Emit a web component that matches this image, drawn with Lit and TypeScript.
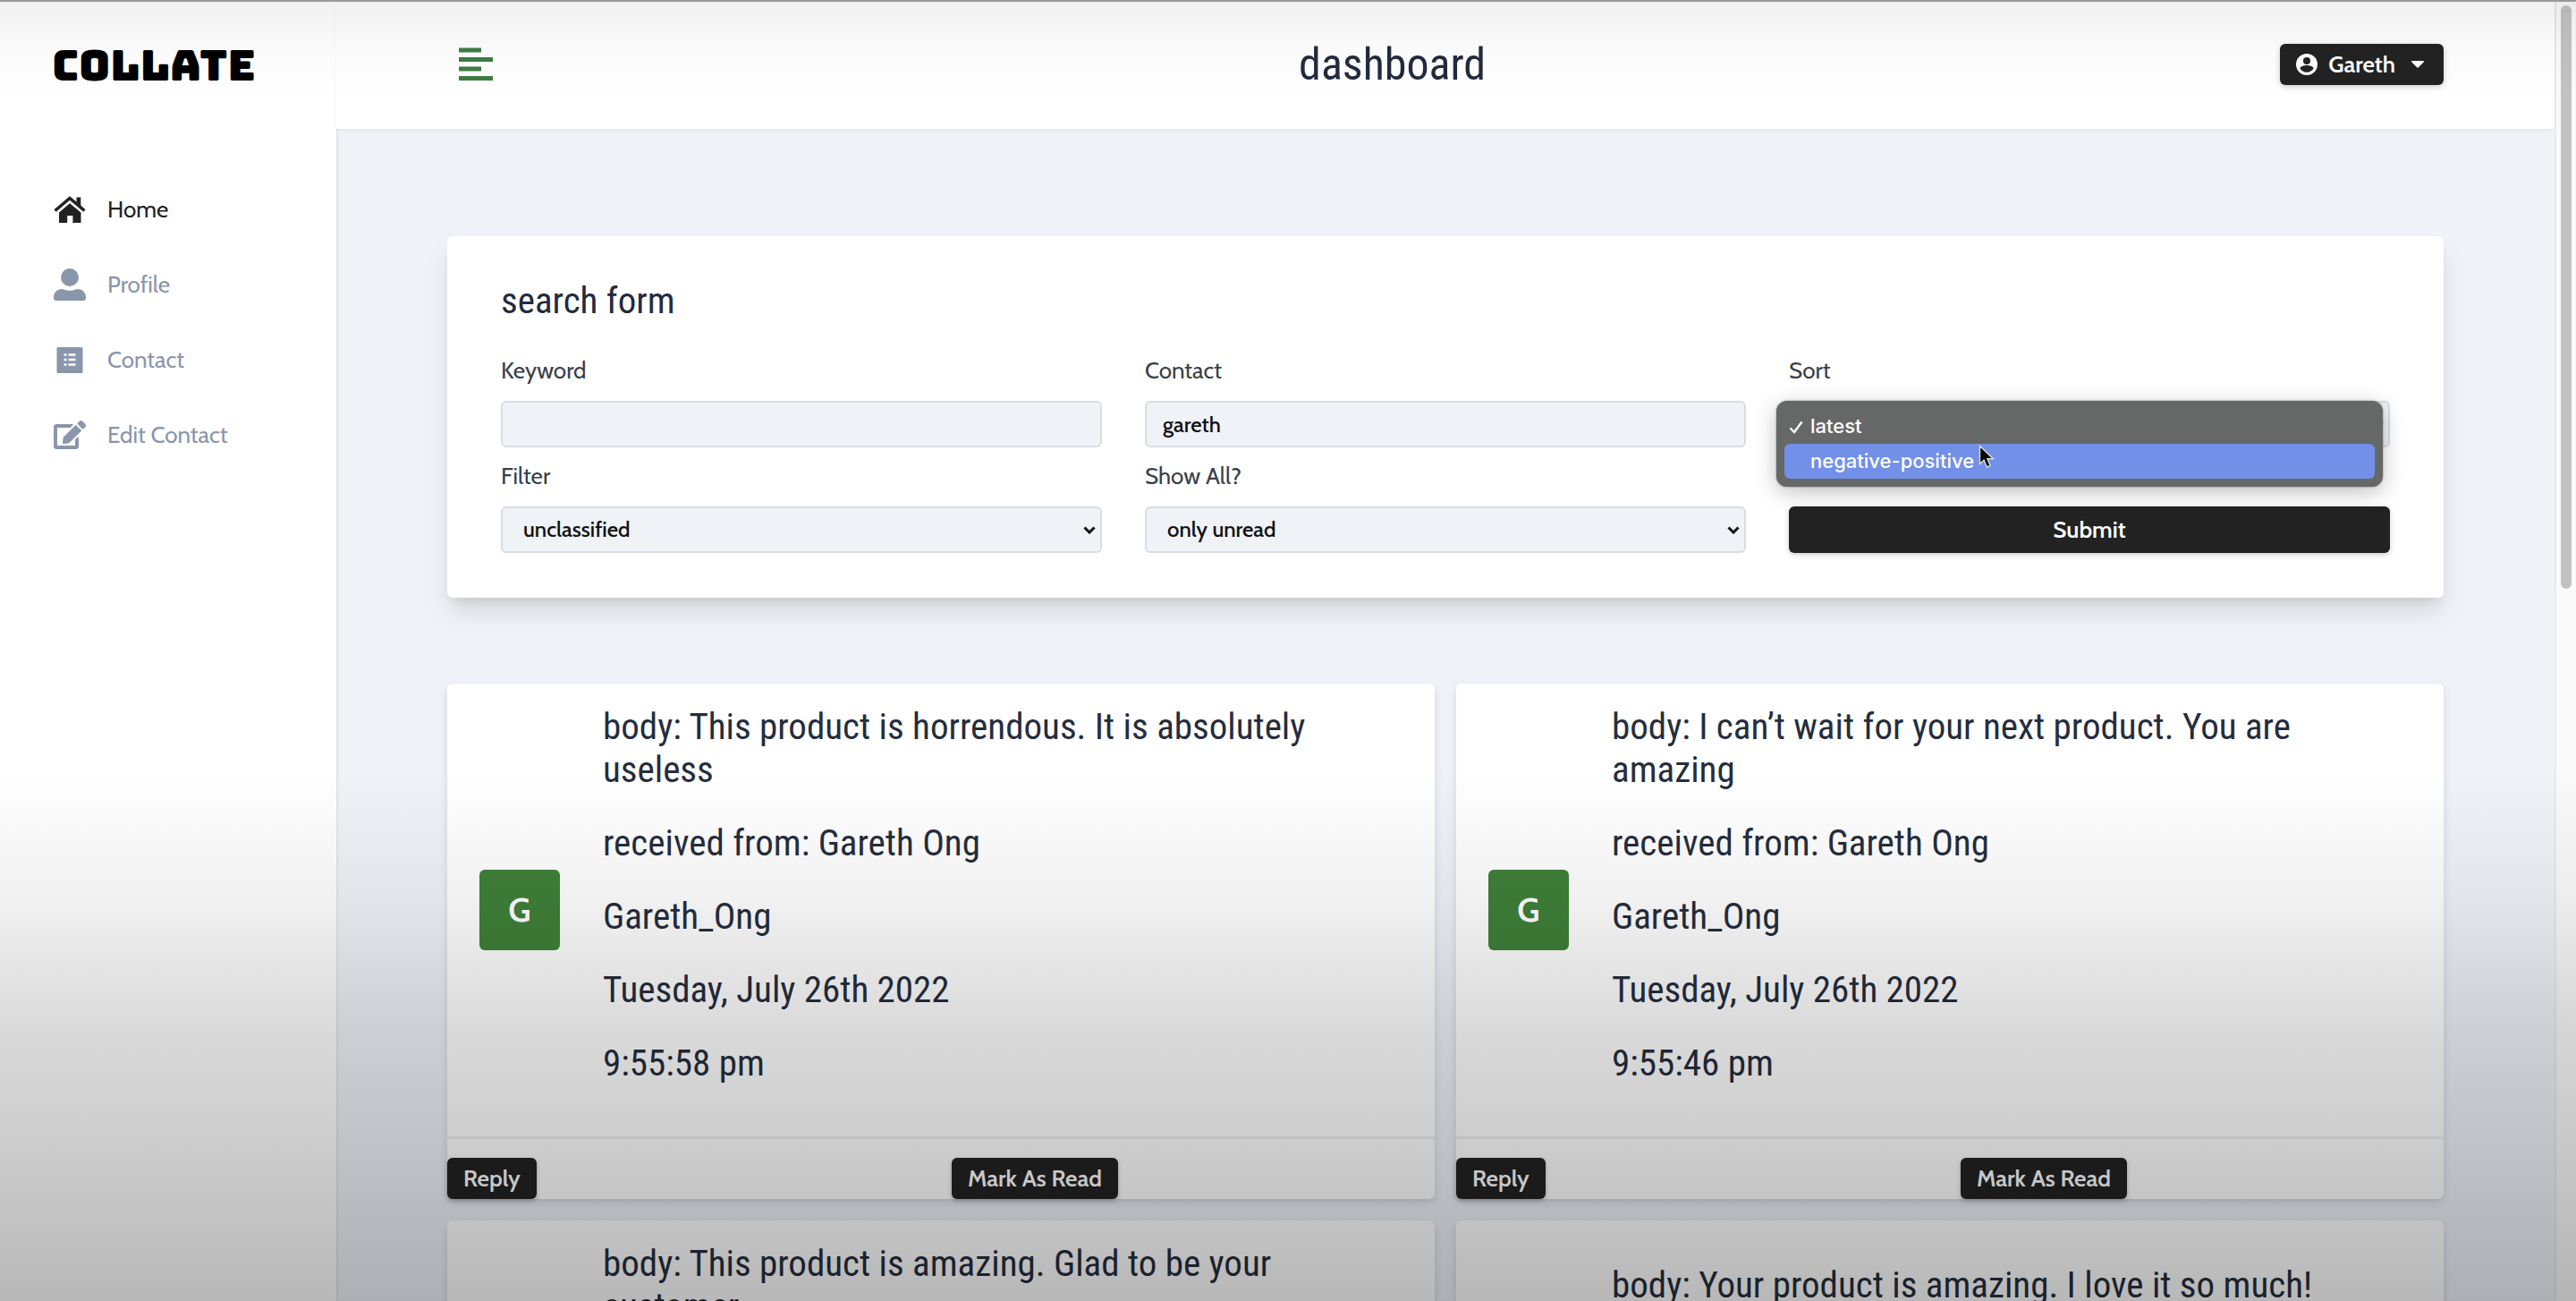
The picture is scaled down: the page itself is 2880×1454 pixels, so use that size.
import { LitElement, html, css, svg } from "lit";
import { customElement, property, state } from "lit/decorators.js";

const icons = {
  home: svg`<svg viewBox="0 0 36 36" aria-hidden="true"><path d="M1.5 19.5 18 5.5l16.5 14" fill="none" stroke="currentColor" stroke-width="3.6"/><path d="M25.5 4.5h4.8V15l-4.8-4z" fill="currentColor"/><path d="M6 21.5 18 11.2l12.5 10.3V33H21.4v-8h-6.2v8H6z" fill="currentColor"/></svg>`,
  user: svg`<svg viewBox="0 0 36 36" aria-hidden="true"><circle cx="18" cy="10" r="10" fill="currentColor"/><path d="M0 32c0-5 4-9 9-9h1c5 2.400 11 2.400 16 0h1c5 0 9 4 9 9v1c0 2-1 3-3 3H3c-2 0-3-1-3-3z" fill="currentColor"/></svg>`,
  list: svg`<svg viewBox="0 0 36 36" aria-hidden="true"><rect x="3.500" y="4" width="29" height="29" rx="1.500" fill="currentColor"/><path d="M11.500 12.500h3M11.500 18h3M11.500 23.500h3M16.500 12.500h8M16.500 18h8M16.500 23.500h8" stroke="#fff" stroke-width="2.400"/></svg>`,
  edit: svg`<svg viewBox="0 0 576 512" aria-hidden="true"><path fill="currentColor" d="M402.6 83.2l90.2 90.2c3.800 3.800 3.800 10 0 13.800L274.400 405.600l-92.800 10.300c-12.400 1.400-22.900-9.100-21.500-21.500l10.300-92.800L388.800 83.200c3.800-3.800 10-3.800 13.800 0zm162-22.900l-48.800-48.800c-15.200-15.200-39.900-15.200-55.200 0l-35.400 35.400c-3.800 3.800-3.800 10 0 13.800l90.200 90.200c3.800 3.800 10 3.800 13.800 0l35.400-35.400c15.200-15.300 15.200-40 0-55.200zM384 346.200V448H64V128h229.800c3.200 0 6.200-1.300 8.500-3.500l40-40c7.600-7.600 2.200-20.500-8.500-20.500H48C21.500 64 0 85.500 0 112v352c0 26.500 21.500 48 48 48h352c26.500 0 48-21.500 48-48V306.200c0-10.700-12.900-16-20.500-8.500l-40 40c-2.200 2.300-3.500 5.300-3.500 8.500z"/></svg>`,
  menu: svg`<svg viewBox="0 0 38 40" aria-hidden="true"><path d="M0 4h25M0 14.500h38M0 25h25M0 35.500h38" stroke="currentColor" stroke-width="5"/></svg>`,
  account: svg`<svg viewBox="0 0 24 24" aria-hidden="true"><circle cx="12" cy="12" r="12" fill="currentColor"/><circle cx="12" cy="8" r="4" fill="#222"/><path d="M4.500 16.500c0-2 4-3.500 7.500-3.500s7.500 1.500 7.500 3.500c-1.500 2.500-4 4.300-7.500 4.300s-6-1.800-7.500-4.300z" fill="#222"/></svg>`,
  caret: svg`<svg viewBox="0 0 16 9" aria-hidden="true"><path d="M1 0h14c1 0 1.300 1 .6 1.600L9 8.400c-.6.6-1.400.6-2 0L.4 1.600C-.3 1 0 0 1 0z" fill="currentColor"/></svg>`,
  chevron: svg`<svg viewBox="0 0 14 9" aria-hidden="true"><path d="M1.500 1.500 7 7l5.500-5.500" fill="none" stroke="currentColor" stroke-width="3"/></svg>`,
  check: svg`<svg viewBox="0 0 16 16" aria-hidden="true"><path d="M1.500 9.500 6 14 14.500 2.500" fill="none" stroke="currentColor" stroke-width="2.400"/></svg>`,
  pointer: svg`<svg viewBox="0 0 18 28" aria-hidden="true"><path d="M1.500 1.500v20l4.600-4.400 3.200 7.900 3.800-1.600-3.200-7.600h6.600z" fill="#000" stroke="#ddd" stroke-width="1.400"/></svg>`,
};

@customElement("message-card")
export class MessageCard extends LitElement {
  @property() body = "";
  @property() time = "";

  static styles = css`
    :host {
      display: grid;
      grid-template-rows: 1fr auto;
      background: #fff;
      border-radius: 6px;
      box-shadow: 0 4px 10px rgba(0, 0, 0, 0.12);
      color: #252d3d;
      font-family: "Cabin", "Lato", sans-serif;
    }
    .head {
      display: grid;
      grid-template-columns: auto 1fr;
      align-items: center;
      gap: 48px;
      padding: 24px 36px;
      border-bottom: 3px solid #eef0f3;
    }
    .avatar {
      display: grid;
      place-items: center;
      width: 90px;
      height: 90px;
      border-radius: 6px;
      background: #3f8039;
      color: #fff;
      font-size: 38px;
      font-weight: 600;
      line-height: 48px;
    }
    .info {
      padding-right: 48px;
    }
    h2 {
      margin: 0 0 34px;
      font: 400 41px/48px "Roboto Condensed", "Roboto", sans-serif;
    }
    .actions {
      display: grid;
      grid-template-columns: 1fr 1fr;
      gap: 24px;
      padding-top: 21px;
      justify-items: start;
    }
    button {
      height: 46px;
      padding: 0 18px;
      border: 0;
      border-radius: 6px;
      background: #222;
      color: #fff;
      font: 600 26px/44px "Cabin", "Lato", sans-serif;
      box-shadow: 0 2px 5px rgba(0, 0, 0, 0.25);
    }
  `;

  render() {
    return html`
      <div class="head">
        <div class="avatar">G</div>
        <div class="info">
          <h2>body: ${this.body}</h2>
          <h2>received from: Gareth Ong</h2>
          <h2>Gareth_Ong</h2>
          <h2>Tuesday, July 26th 2022</h2>
          ${this.time ? html`<h2>${this.time}</h2>` : ""}
        </div>
      </div>
      <div class="actions">
        <button type="button">Reply</button>
        <button type="button">Mark As Read</button>
      </div>
    `;
  }
}

@customElement("app-root")
export class AppRoot extends LitElement {
  @state() private sort = "latest";

  private links = [
    { label: "Home", icon: icons.home, active: true },
    { label: "Profile", icon: icons.user, active: false },
    { label: "Contact", icon: icons.list, active: false },
    { label: "Edit Contact", icon: icons.edit, active: false },
  ];

  private messages = [
    { body: "This product is horrendous. It is absolutely useless", time: "9:55:58 pm" },
    { body: "I can’t wait for your next product. You are amazing", time: "9:55:46 pm" },
    { body: "This product is amazing. Glad to be your customer", time: "" },
    { body: "Your product is amazing. I love it so much!", time: "" },
  ];

  static styles = css`
    :host {
      display: block;
      font-family: "Cabin", "Lato", sans-serif;
      color: #222;
    }
    * {
      box-sizing: border-box;
    }
    svg {
      display: block;
      width: 100%;
    }
    .shell {
      position: relative;
      display: grid;
      grid-template-columns: 376px minmax(0, 1fr) 24px;
      grid-template-rows: 100%;
      height: 100vh;
      overflow: hidden;
      background: #eff3f8;
    }
    .shade {
      position: absolute;
      inset: 0;
      pointer-events: none;
      border-top: 2px solid #999;
      background:
        linear-gradient(rgba(0, 0, 0, 0.06), rgba(0, 0, 0, 0.02) 52px, transparent 110px),
        linear-gradient(transparent 59%, rgba(0, 0, 0, 0.055) 69%, rgba(0, 0, 0, 0.145) 79%, rgba(0, 0, 0, 0.2) 88%, rgba(0, 0, 0, 0.28));
    }
    .sidebar {
      background: #fff;
    }
    .logo {
      display: flex;
      align-items: center;
      height: 144px;
      padding: 2px 58px 0;
      margin-bottom: 48px;
      color: #000;
      font: 400 48px/1 "Bungee", "Roboto", sans-serif;
    }
    .link {
      display: grid;
      grid-template-columns: 36px auto;
      align-items: center;
      gap: 24px;
      height: 84px;
      padding-left: 60px;
      color: #8a96aa;
      font-size: 26px;
      text-decoration: none;
    }
    .link.active {
      color: #222;
    }
    main {
      box-shadow: inset 2px 0 2px rgba(0, 0, 0, 0.06);
    }
    .navbar {
      height: 144px;
      background: #fff;
      box-shadow: 0 2px 3px rgba(0, 0, 0, 0.05);
    }
    .bar {
      display: flex;
      align-items: center;
      justify-content: space-between;
      width: 90%;
      height: 100%;
      margin: 0 auto;
    }
    .toggle {
      width: 64px;
      padding: 0 13px;
      border: 0;
      background: none;
      color: #3f7d43;
    }
    h1 {
      margin: 0;
      color: #222b3e;
      font: 400 50px/60px "Roboto Condensed", "Roboto", sans-serif;
    }
    .account {
      display: flex;
      align-items: center;
      gap: 12px;
      height: 46px;
      padding: 0 22px 0 18px;
      border: 0;
      border-radius: 6px;
      background: #222;
      color: #fff;
      font: 600 26px/46px "Cabin", "Lato", sans-serif;
      box-shadow: 0 2px 6px rgba(0, 0, 0, 0.2);
    }
    .face {
      width: 24px;
    }
    .caret {
      width: 14px;
      margin-left: 6px;
    }
    .content {
      width: 90%;
      margin: 0 auto;
      padding-top: 120px;
    }
    form {
      padding: 48px 60px 50px;
      margin-bottom: 96px;
      border-radius: 6px;
      background: #fff;
      box-shadow: 0 18px 30px -4px rgba(0, 0, 0, 0.12), 0 8px 12px -4px rgba(0, 0, 0, 0.08);
    }
    h2 {
      margin: 0 0 36px;
      color: #222b3e;
      font: 400 41px/48px "Roboto Condensed", "Roboto", sans-serif;
    }
    .fields {
      display: grid;
      grid-template-columns: repeat(3, minmax(0, 1fr));
      gap: 14px 48px;
      align-items: end;
    }
    .field {
      position: relative;
      display: grid;
      gap: 16px;
    }
    label {
      color: #3a3f47;
      font-size: 26px;
      line-height: 36px;
    }
    input,
    select {
      width: 100%;
      height: 52px;
      padding: 0 18px;
      border: 2px solid #d9dde3;
      border-radius: 6px;
      background: #eff3f8;
      color: #111;
      font: 500 24px/36px "Cabin", "Lato", sans-serif;
      appearance: none;
      outline: 0;
    }
    select {
      padding: 0 23px;
    }
    .arrow {
      position: absolute;
      right: 7px;
      bottom: 21px;
      width: 14px;
      color: #111;
      pointer-events: none;
    }
    .submit {
      height: 52px;
      border: 0;
      border-radius: 6px;
      background: #222;
      color: #fff;
      font: 600 26px/50px "Cabin", "Lato", sans-serif;
      box-shadow: 0 2px 6px rgba(0, 0, 0, 0.2);
    }
    .popup {
      position: absolute;
      left: -14px;
      right: 8px;
      top: 52px;
      margin: 0;
      padding: 9px;
      border-radius: 12px;
      background: #666867;
      color: #fff;
      list-style: none;
      font: 500 22px/39px "Inter", "Liberation Sans", sans-serif;
      box-shadow: 0 6px 24px rgba(0, 0, 0, 0.25), 0 0 2px rgba(0, 0, 0, 0.5);
    }
    .option {
      display: grid;
      grid-template-columns: 16px auto 1fr;
      align-items: center;
      gap: 8px;
      padding-left: 5px;
      border-radius: 6px;
    }
    .option.hover {
      background: #7290e8;
    }
    .pointer {
      position: absolute;
      left: 212px;
      top: 101px;
      width: 18px;
      pointer-events: none;
    }
    .messages {
      display: grid;
      grid-template-columns: repeat(2, minmax(0, 1fr));
      gap: 24px;
    }
    .track {
      padding: 6px 5px 0;
      border-left: 2px solid #e8e8e8;
      background: #fafafa;
    }
    .thumb {
      height: 45%;
      border-radius: 6px;
      background: #c2c2c2;
    }
  `;

  render() {
    return html`
      <div class="shell">
        <aside class="sidebar">
          <div class="logo">COLLATE</div>
          <nav>
            ${this.links.map(
              (l) => html`<a class="link ${l.active ? "active" : ""}" href="#"><span>${l.icon}</span><span>${l.label}</span></a>`
            )}
          </nav>
        </aside>
        <main>
          <header class="navbar">
            <div class="bar">
              <button class="toggle" type="button" aria-label="Toggle sidebar">${icons.menu}</button>
              <h1>dashboard</h1>
              <button class="account" type="button">
                <span class="face">${icons.account}</span>Gareth<span class="caret">${icons.caret}</span>
              </button>
            </div>
          </header>
          <div class="content">
            <form @submit=${(e: Event) => e.preventDefault()}>
              <h2>search form</h2>
              <div class="fields">
                <div class="field">
                  <label for="keyword">Keyword</label>
                  <input id="keyword" type="text" />
                </div>
                <div class="field">
                  <label for="contact">Contact</label>
                  <input id="contact" type="text" value="gareth" />
                </div>
                <div class="field">
                  <label for="sort">Sort</label>
                  <select id="sort" .value=${this.sort}>
                    <option>latest</option>
                    <option>negative-positive</option>
                  </select>
                  <span class="arrow">${icons.chevron}</span>
                  <ul class="popup" role="listbox" aria-label="Sort">
                    <li class="option" role="option" aria-selected="true" @click=${() => (this.sort = "latest")}>
                      <span>${icons.check}</span><span>latest</span>
                    </li>
                    <li class="option hover" role="option" aria-selected="false" @click=${() => (this.sort = "negative-positive")}>
                      <span></span><span>negative-positive</span>
                    </li>
                  </ul>
                  <span class="pointer">${icons.pointer}</span>
                </div>
                <div class="field">
                  <label for="filter">Filter</label>
                  <select id="filter"><option>unclassified</option></select>
                  <span class="arrow">${icons.chevron}</span>
                </div>
                <div class="field">
                  <label for="show">Show All?</label>
                  <select id="show"><option>only unread</option></select>
                  <span class="arrow">${icons.chevron}</span>
                </div>
                <button class="submit" type="submit">Submit</button>
              </div>
            </form>
            <section class="messages">
              ${this.messages.map((m) => html`<message-card .body=${m.body} .time=${m.time}></message-card>`)}
            </section>
          </div>
        </main>
        <div class="track"><div class="thumb"></div></div>
        <div class="shade"></div>
      </div>
    `;
  }
}
